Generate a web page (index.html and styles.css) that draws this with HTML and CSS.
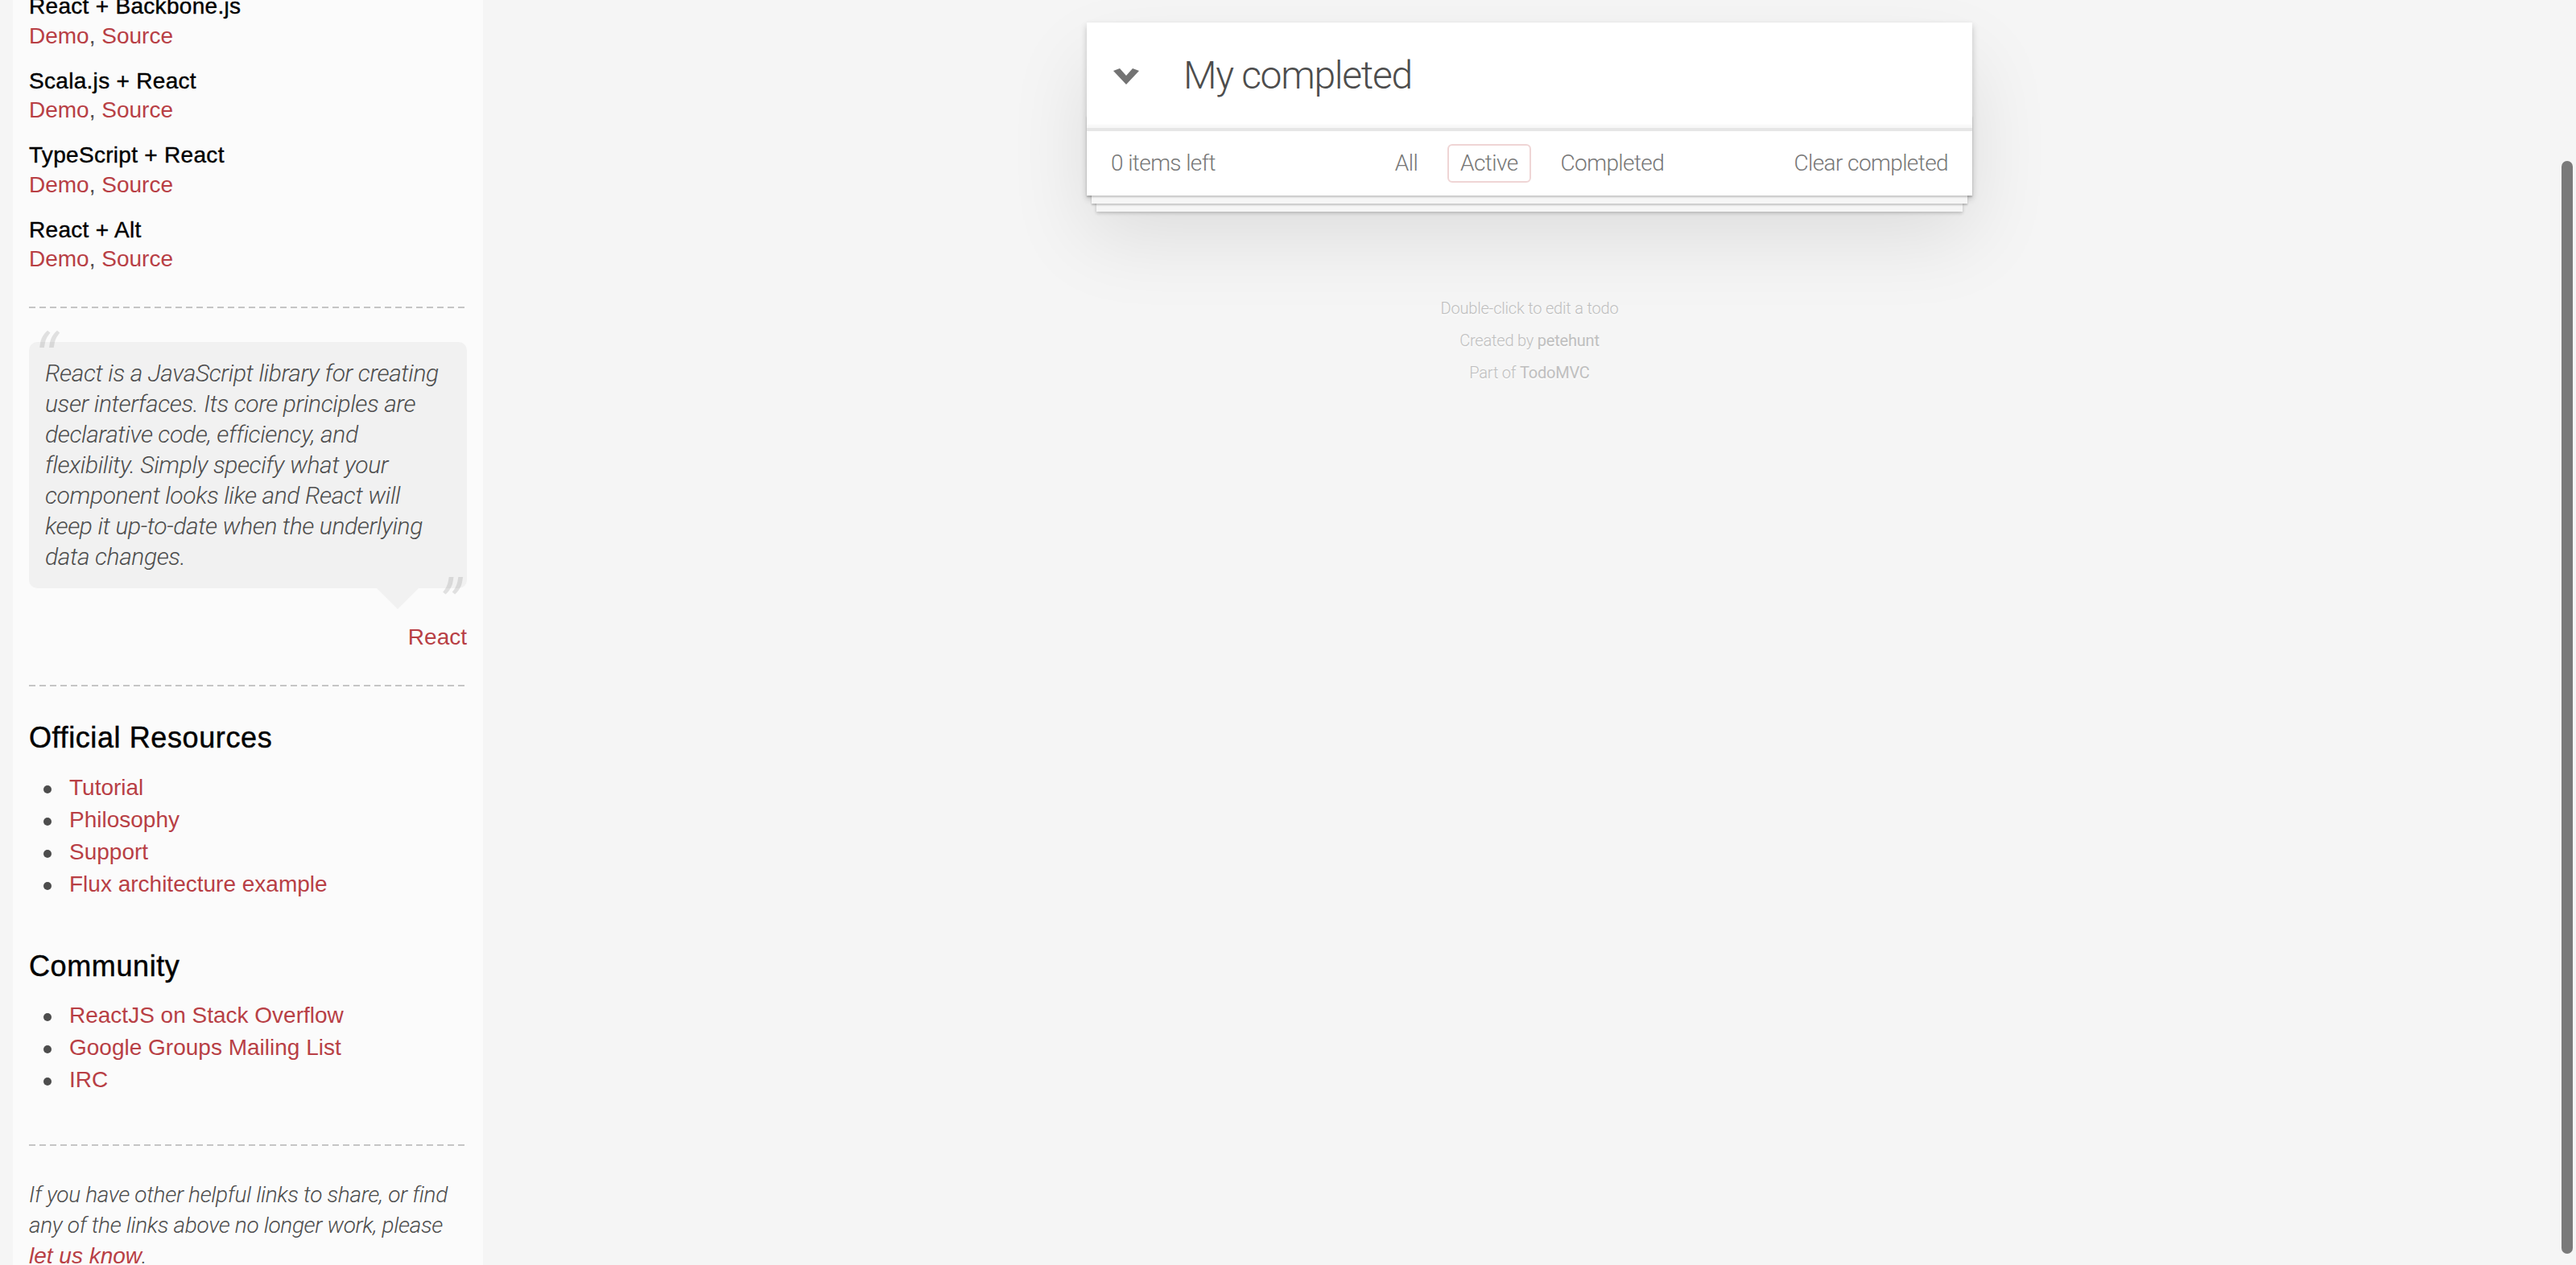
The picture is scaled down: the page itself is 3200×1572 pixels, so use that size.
FILE: index.html
```html
<!DOCTYPE html>
<html lang="en">
<head>
<meta charset="utf-8">
<title>React • TodoMVC</title>
<link rel="stylesheet" href="styles.css">
</head>
<body>
<aside class="learn">
  <div class="examples">
    <div class="example">
      <h5>React + Backbone.js</h5>
      <p class="links"><a href="#">Demo</a>, <a href="#">Source</a></p>
    </div>
    <div class="example">
      <h5>Scala.js + React</h5>
      <p class="links"><a href="#">Demo</a>, <a href="#">Source</a></p>
    </div>
    <div class="example">
      <h5>TypeScript + React</h5>
      <p class="links"><a href="#">Demo</a>, <a href="#">Source</a></p>
    </div>
    <div class="example">
      <h5>React + Alt</h5>
      <p class="links"><a href="#">Demo</a>, <a href="#">Source</a></p>
    </div>
  </div>
  <hr>
  <blockquote class="quote">
    <span class="quote-mark quote-open">“</span>
    <p class="quote-text">React is a JavaScript library for creating<br>user interfaces. Its core principles are<br>declarative code, efficiency, and<br>flexibility. Simply specify what your<br>component looks like and React will<br>keep it up-to-date when the underlying<br>data changes.</p>
    <span class="quote-mark quote-close">”</span>
    <footer class="quote-source"><a href="#">React</a></footer>
  </blockquote>
  <hr>
  <h4>Official Resources</h4>
  <ul class="resource-list">
    <li><a href="#">Tutorial</a></li>
    <li><a href="#">Philosophy</a></li>
    <li><a href="#">Support</a></li>
    <li><a href="#">Flux architecture example</a></li>
  </ul>
  <h4>Community</h4>
  <ul class="resource-list">
    <li><a href="#">ReactJS on Stack Overflow</a></li>
    <li><a href="#">Google Groups Mailing List</a></li>
    <li><a href="#">IRC</a></li>
  </ul>
  <footer class="learn-footer">
    <hr>
    <p class="learn-note">If you have other helpful links to share, or find<br>any of the links above no longer work, please<br><a href="#">let us know</a>.</p>
  </footer>
</aside>

<main class="app-area">
  <section class="todoapp">
    <header class="header">
      <span class="toggle-all">
        <svg viewBox="0 0 32 20" aria-hidden="true"><polygon points="0,3 8,0 16,9 24,0 32,3 16,20" fill="#737373"/></svg>
      </span>
      <div class="new-todo">My completed</div>
    </header>
    <section class="main"></section>
    <footer class="footer">
      <span class="todo-count"><strong>0</strong> items left</span>
      <ul class="filters">
        <li><a href="#">All</a></li>
        <li><a href="#" class="selected">Active</a></li>
        <li><a href="#">Completed</a></li>
      </ul>
      <button class="clear-completed">Clear completed</button>
    </footer>
  </section>
  <footer class="info">
    <p>Double-click to edit a todo</p>
    <p>Created by <a href="#">petehunt</a></p>
    <p>Part of <a href="#">TodoMVC</a></p>
  </footer>
</main>

<div class="scroll-thumb"></div>
</body>
</html>
```

FILE: styles.css
```css
* {
  box-sizing: border-box;
}

html,
body {
  margin: 0;
  padding: 0;
}

body {
  position: relative;
  display: flex;
  align-items: flex-start;
  height: 1572px;
  overflow: hidden;
  background: #f5f5f5;
  color: #4d4d4d;
  font-family: "Liberation Sans", Arial, Helvetica, sans-serif;
  font-size: 28px;
  line-height: 1.4;
}

/* ---------- sidebar ---------- */
.learn {
  flex: none;
  width: 584px;
  margin-left: 16px;
  padding: 0 20px;
  background: rgba(255, 255, 255, 0.6);
}

.examples {
  margin-top: -29px;
}

.learn h5 {
  margin: 20px 0 0;
  font-size: 28px;
  line-height: 1.2;
  font-weight: 400;
  letter-spacing: 0.3px;
  color: #000;
  -webkit-text-stroke: 0.4px #000;
}

.learn h4 {
  margin: 20px 0;
  font-size: 36px;
  line-height: 1.2;
  font-weight: 400;
  letter-spacing: 0.6px;
  color: #000;
  -webkit-text-stroke: 0.45px #000;
}

.learn p {
  margin: 0;
}

.learn a {
  color: #b83f45;
  text-decoration: none;
  font-weight: 400;
}

.links {
  font-size: 28px;
  line-height: 39px;
}

.learn hr {
  height: 2px;
  margin: 40px 0 42px;
  border: 0;
  background: repeating-linear-gradient(90deg, #c5c5c5 0 8px, transparent 8px 13px);
}

.quote {
  position: relative;
  margin: 40px 0 120px;
  padding: 20px;
  background: rgba(0, 0, 0, 0.04);
  border-radius: 10px;
}

.quote::after {
  content: "";
  position: absolute;
  top: 100%;
  right: 60px;
  border: 26px solid transparent;
  border-top-color: rgba(0, 0, 0, 0.04);
}

.quote-text,
.learn-note {
  font-family: Roboto, "Liberation Sans", Arial, sans-serif;
  font-weight: 300;
  font-style: italic;
  line-height: 38px;
  white-space: nowrap;
}

.quote-text {
  font-size: 30px;
  letter-spacing: -0.4px;
}

.learn-note {
  font-size: 28px;
  letter-spacing: -0.35px;
}

.learn-note a {
  font-family: "Liberation Sans", Arial, sans-serif;
  letter-spacing: 0;
}

.quote-mark {
  position: absolute;
  font-family: Roboto, "Liberation Sans", Arial, sans-serif;
  font-style: italic;
  font-weight: 300;
  font-size: 100px;
  line-height: 1;
  opacity: 0.15;
}

.quote-open {
  top: -22px;
  left: 4px;
}

.quote-close {
  bottom: -77px;
  right: 8px;
}

.quote-source {
  position: absolute;
  right: 0;
  bottom: -80px;
  line-height: 39px;
}

.resource-list {
  margin: 0 0 60px 50px;
  padding: 0;
  list-style: none;
}

.resource-list li {
  position: relative;
  line-height: 40px;
}

.resource-list li::before {
  content: "";
  position: absolute;
  left: -32px;
  top: 17px;
  width: 10px;
  height: 10px;
  border-radius: 50%;
  background: #4d4d4d;
}

/* ---------- todo app ---------- */
.app-area {
  flex: 1;
  min-width: 0;
  padding-top: 28px;
}

.todoapp {
  position: relative;
  width: 1100px;
  margin: 0 auto;
  background: #fff;
  box-shadow: 0 4px 8px 0 rgba(0, 0, 0, 0.2), 0 50px 100px 0 rgba(0, 0, 0, 0.1);
}

.header {
  display: flex;
  align-items: center;
  height: 131px;
  box-shadow: inset 0 -4px 2px rgba(0, 0, 0, 0.03);
}

.toggle-all {
  flex: none;
  display: flex;
  width: 120px;
  padding-left: 33px;
  margin-top: 3px;
}

.toggle-all svg {
  display: block;
  width: 32px;
  height: 20px;
}

.new-todo {
  font-family: Roboto, "Liberation Sans", Arial, sans-serif;
  font-weight: 300;
  font-size: 48px;
  line-height: 67px;
  letter-spacing: -1.3px;
  color: #4d4d4d;
}

.main {
  border-top: 2px solid #e6e6e6;
}

.footer {
  position: relative;
  display: grid;
  grid-template-columns: 1fr auto 1fr;
  align-items: center;
  height: 82px;
  padding: 0 30px;
  border-top: 2px solid #e6e6e6;
  color: #777;
  font-family: Roboto, "Liberation Sans", Arial, sans-serif;
  font-weight: 300;
  font-size: 28px;
  letter-spacing: -0.6px;
}

.footer::before {
  content: "";
  position: absolute;
  left: 0;
  right: 0;
  bottom: 0;
  height: 100px;
  pointer-events: none;
  box-shadow:
    0 2px 2px rgba(0, 0, 0, 0.2),
    0 16px 0 -6px #f6f6f6,
    0 18px 2px -6px rgba(0, 0, 0, 0.2),
    0 32px 0 -12px #f6f6f6,
    0 34px 4px -12px rgba(0, 0, 0, 0.2);
}

.todo-count {
  justify-self: start;
}

.todo-count strong {
  font-weight: 300;
}

.filters {
  display: flex;
  gap: 21px;
  margin: 0;
  padding: 0;
  list-style: none;
}

.filters a {
  display: block;
  padding: 6px 14px;
  border: 2px solid transparent;
  border-radius: 6px;
  color: inherit;
  text-decoration: none;
  line-height: 32px;
}

.filters a.selected {
  border-color: rgba(175, 47, 47, 0.2);
}

.clear-completed {
  justify-self: end;
  padding: 0;
  border: 0;
  background: none;
  color: inherit;
  font: inherit;
  letter-spacing: inherit;
  cursor: pointer;
}

.info {
  margin: 130px auto 0;
  text-align: center;
  font-family: Roboto, "Liberation Sans", Arial, sans-serif;
  font-weight: 300;
  font-size: 20px;
  letter-spacing: -0.2px;
  color: #bfbfbf;
  text-shadow: 0 2px 0 rgba(255, 255, 255, 0.5);
}

.info p {
  margin: 20px 0;
  line-height: 1;
}

.info a {
  color: inherit;
  text-decoration: none;
  font-weight: 400;
}

/* overlay scrollbar */
.scroll-thumb {
  position: absolute;
  top: 200px;
  right: 4px;
  width: 14px;
  height: 1358px;
  border-radius: 7px;
  background: rgba(0, 0, 0, 0.5);
}
```
